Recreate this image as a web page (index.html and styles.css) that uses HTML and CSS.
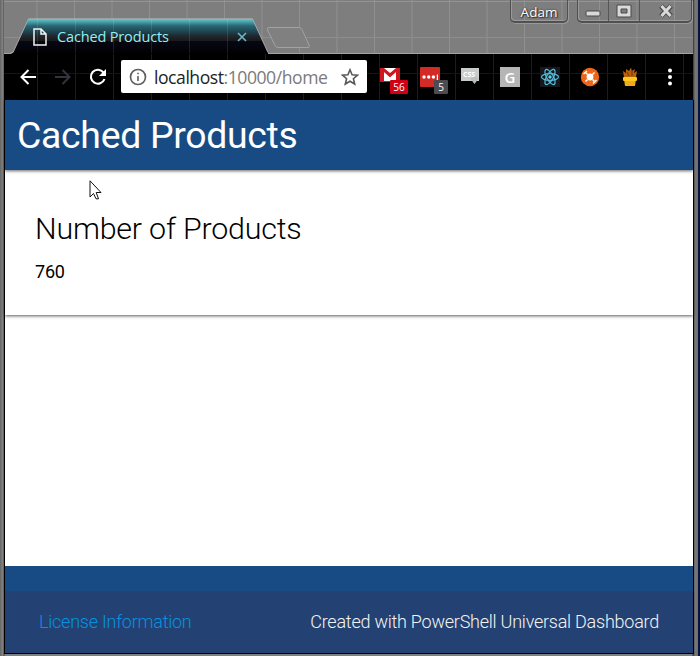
FILE: index.html
```html
<!DOCTYPE html>
<html lang="en">
<head>
<meta charset="utf-8">
<title>Cached Products</title>
<link rel="stylesheet" href="styles.css">
</head>
<body>
<div class="window">
  <header class="titlebar">
    <div class="tab">
      <svg class="tab-shape" width="258" height="36" viewBox="0 0 258 36">
        <defs><linearGradient id="g" x1="0" y1="0" x2="0" y2="1">
          <stop offset="0" stop-color="#64c4ca"/><stop offset=".07" stop-color="#4daab3"/><stop offset=".2" stop-color="#2a6673"/><stop offset=".4" stop-color="#1d3c49"/><stop offset=".5" stop-color="#20262a"/><stop offset=".63" stop-color="#19191b"/><stop offset=".64" stop-color="#070713"/><stop offset=".85" stop-color="#03030a"/><stop offset="1" stop-color="#000"/>
        </linearGradient></defs>
        <path d="M0 36L2 34.500 17.500 .8H241.500L257 34.500V36Z" fill="url(#g)"/>
        <path d="M0 34.500H2L17.500 .8H241.500L257 34.500" fill="none" stroke="#a8a8a8"/>
        <path d="M18 1.500H241" stroke="#60c5cc"/>
        <path d="M26.500 1v34M64.500 1v34M102.500 1v34M140.500 1v34M178.500 1v34M216.500 1v34" stroke="#fff" opacity=".1"/>
      </svg>
      <svg class="page-icon" width="14" height="18" viewBox="0 0 14 18"><path d="M1 1H8L13 6V17H1ZM8 1V6H13" fill="none" stroke="#f4f4f4" stroke-width="1.500"/></svg>
      <span class="tab-title">Cached Products</span>
      <svg class="tab-close" width="10" height="10" viewBox="0 0 10 10"><path d="M1 1L9 9M9 1L1 9" stroke="#6fb4c4" stroke-width="1.700"/></svg>
    </div>
    <svg class="new-tab" width="44" height="22" viewBox="0 0 44 22"><path d="M3 .5H33Q35 .5 36 2.500L43 18Q44 20.500 42 20.500H12Q10 20.500 9 18.500L1.500 3Q.5 .5 3 .5Z" fill="#808080" stroke="#a2a2a2"/></svg>
    <div class="user">Adam</div>
    <div class="controls">
      <span class="ctl"><svg width="16" height="7" viewBox="0 0 16 7"><rect x="1" y="1" width="14" height="5" rx="1" fill="#d9d9d9" stroke="#484848"/></svg></span>
      <span class="ctl"><svg width="16" height="14" viewBox="0 0 16 14"><path d="M1 1H15V13H1ZM5 5V9H11V5Z" fill="#d9d9d9" fill-rule="evenodd" stroke="#484848"/></svg></span>
      <span class="ctl ctl-close"><svg width="16" height="14" viewBox="0 0 16 14"><path d="M3 2L13 12M13 2L3 12" stroke="#484848" stroke-width="5"/><path d="M3.500 2L12.500 12M12.500 2L3.500 12" stroke="#d9d9d9" stroke-width="3"/></svg></span>
    </div>
  </header>
  <nav class="toolbar">
    <svg class="nav-icon" width="17" height="16" viewBox="0 0 17 16"><path d="M16 8H2M8.500 1L1.500 8 8.500 15" fill="none" stroke="#fff" stroke-width="2"/></svg>
    <svg class="nav-icon forward" width="17" height="16" viewBox="0 0 17 16"><path d="M1 8H15M8.500 1L15.500 8 8.500 15" fill="none" stroke="#37323c" stroke-width="2"/></svg>
    <svg class="nav-icon reload" width="18" height="18" viewBox="0 0 18 18"><path d="M14.500 4.500A7 7 0 1 0 15.500 11" fill="none" stroke="#fff" stroke-width="2.100"/><path d="M17 1V8H10Z" fill="#fff"/></svg>
    <div class="address">
      <svg class="info" width="18" height="18" viewBox="0 0 18 18"><circle cx="9" cy="9" r="7.500" fill="none" stroke="#5f6064" stroke-width="1.700"/><path d="M8.200 8H9.800V13H8.200ZM8.200 4.700H9.800V6.300H8.200Z" fill="#5f6064"/></svg>
      <span class="url"><b>localhost</b>:10000/home</span>
      <svg class="star" width="18" height="18" viewBox="0 0 18 18"><path d="M9 1.800L11.100 6.700 16.500 7.200 12.400 10.700 13.700 16 9 13.200 4.300 16 5.600 10.700 1.500 7.200 6.900 6.700Z" fill="none" stroke="#58585c" stroke-width="1.600"/></svg>
    </div>
    <div class="extensions">
      <span class="ext"><svg width="20" height="16" viewBox="0 0 20 16"><path d="M0 1H20V15H0Z" fill="#cf1720"/><path d="M3.500 1H16.500L10 6Z" fill="#fff"/><path d="M4 5L10 10 16 5V14H4Z" fill="#fff"/><path d="M3 2L10 8.500 17 2" fill="none" stroke="#cf1720" stroke-width="2.500"/></svg><i class="badge mail">56</i></span>
      <span class="ext"><svg width="20" height="20" viewBox="0 0 20 20"><rect width="20" height="20" rx="1" fill="#d42a25"/><circle cx="4" cy="10" r="1.700" fill="#fff"/><circle cx="8.700" cy="10" r="1.700" fill="#fff"/><circle cx="13.400" cy="10" r="1.700" fill="#fff"/><path d="M16.800 7.500H18V13H16.800Z" fill="#fff"/></svg><i class="badge count">5</i></span>
      <span class="ext css-ext"><svg width="20" height="18" viewBox="0 0 20 18"><path d="M1 1H19V14H1Z" fill="#c8cccc"/><path d="M10 11H12V9H17V11H19L14.500 17Z" fill="#b9bebe"/></svg><em>CSS</em></span>
      <span class="ext g-ext">G</span>
      <span class="ext"><svg width="20" height="20" viewBox="0 0 20 20"><path d="M0 0H20V20H0Z" fill="#15181d"/><g fill="none" stroke="#55bddb" stroke-width="1.200"><ellipse cx="10" cy="10" rx="8.500" ry="3.300"/><ellipse cx="10" cy="10" rx="8.500" ry="3.300" transform="rotate(60 10 10)"/><ellipse cx="10" cy="10" rx="8.500" ry="3.300" transform="rotate(120 10 10)"/></g><circle cx="10" cy="10" r="1.700" fill="#61d0ee"/></svg></span>
      <span class="ext"><svg width="20" height="20" viewBox="0 0 20 20"><circle cx="10" cy="10" r="9.200" fill="#ed6518"/><circle cx="10" cy="10" r="3.400" fill="#fff"/><path d="M7.500 7.500L5.500 5.500M12.500 7.500L14.500 5.500M7.500 12.500L5.500 14.500M12.500 12.500L14.500 14.500" stroke="#fff" stroke-width="1.500"/><path d="M3.500 7L7 4M13 16.500L16.500 13" stroke="#fff" stroke-width="1.500"/></svg></span>
      <span class="ext"><svg width="20" height="20" viewBox="0 0 20 20"><path d="M4 10L3 4 6 6 6 2 9 4 11 .5 12 4 15 2 14 6 17 4 16 10Z" fill="#b7600c"/><path d="M7 5L9 9M12 3V9" stroke="#6d3508"/><path d="M4 12H16L15 19H5Z" fill="#edac18"/><rect x="3" y="10" width="14" height="4" rx="1" fill="#ffc71f"/></svg></span>
    </div>
    <svg class="menu" width="6" height="18" viewBox="0 0 6 18"><g fill="#fff"><circle cx="3" cy="2.500" r="2"/><circle cx="3" cy="9" r="2"/><circle cx="3" cy="15.500" r="2"/></g></svg>
  </nav>
  <main class="page">
    <div class="navbar"><h1>Cached Products</h1></div>
    <section class="card">
      <h2>Number of Products</h2>
      <p>760</p>
    </section>
    <footer class="footer">
      <div class="copyright"><a>License Information</a><span>Created with PowerShell Universal Dashboard</span></div>
    </footer>
  </main>
  <svg class="cursor" width="13" height="20" viewBox="0 0 13 20"><path d="M1 .8V17L4.500 13.500 7 18.800H9.500L7.200 12.500H12Z" fill="#fff" stroke="#111"/></svg>
</div>
</body>
</html>
```
FILE: styles.css
```css
* { box-sizing: border-box; }
body { margin: 0; font-family: Roboto, "Liberation Sans", sans-serif; }
svg { display: block; flex: none; }
.window {
  position: relative;
  display: flex;
  flex-direction: column;
  width: 700px;
  height: 656px;
  overflow: hidden;
  padding: 0 7px 2px 4px;
  background: linear-gradient(90deg, #666 0, #858585 3px, #444 4px, #808080 5px, #808080 692px, #333 693px, #777 695px, #707070 698px, #07143d 698px);
}
.titlebar {
  display: flex;
  height: 54px;
  flex: none;
  align-items: flex-start;
  border-bottom: 1px solid #a4a4a4;
  background:
    linear-gradient(#949494, #949494) 0 1px / 100% 1px no-repeat,
    linear-gradient(#8d8d8d, #8d8d8d) 0 37px / 100% 1px no-repeat,
    linear-gradient(90deg, transparent 36.5px, #909090 36.5px) -4px 0 / 37.5px 100%,
    #7e7e7e;
}
.tab {
  position: relative;
  display: flex;
  align-items: center;
  width: 258px;
  height: 36px;
  margin: 18px 0 0 7px;
  padding: 2px 0 0 22px;
}
.tab-shape { position: absolute; left: 0; top: 0; }
.page-icon, .tab-title, .tab-close { position: relative; }
.tab-title {
  width: 112px;
  margin-left: 10px;
  font: 14.5px/20px "Open Sans", "Noto Sans", sans-serif;
  letter-spacing: -.15px;
  color: #8ff0f7;
  white-space: nowrap;
}
.tab-close { margin-left: 68px; }
.new-tab { margin: 27px 0 0 -3px; }
.user, .controls {
  height: 23px;
  border: solid #505050;
  border-width: 0 1px 2px;
  border-radius: 0 0 5px 5px;
  box-shadow: inset 1px -1px #9a9a9a, 1px 1px #999;
}
.user {
  width: 58px;
  margin-left: auto;
  font: 13.5px/24px "Open Sans", "Noto Sans", sans-serif;
  color: #fff;
  text-align: center;
  text-shadow: 0 0 2px #222, 1px 1px 1px #333;
}
.controls { display: flex; width: 115px; margin: 0 1px 0 9px; }
.ctl { display: flex; flex: 0 0 31px; align-items: center; justify-content: center; border-right: 1px solid #565656; }
.ctl:first-child { padding-top: 5px; }
.ctl-close { flex: 1; border: 0; }
.toolbar {
  display: flex;
  flex: none;
  align-items: center;
  height: 46px;
  padding: 0 20px 1px 16px;
  background:
    linear-gradient(#151515, #151515) 0 19px / 100% 1px no-repeat,
    linear-gradient(90deg, transparent 37px, #1c1c1c 37px) -4px 0 / 38px 100%,
    #000;
}
.forward { margin-left: 17px; }
.reload { margin-left: 18px; }
.address {
  display: flex;
  align-items: center;
  width: 246px;
  height: 33px;
  margin-left: 14px;
  padding: 0 8px;
  border-radius: 2px;
  background: #fff;
}
.url {
  margin-left: 7px;
  font: 17.6px/30px "Open Sans", "Noto Sans", sans-serif;
  letter-spacing: -.46px;
  color: #7b7b7b;
  white-space: nowrap;
}
.url b { font-weight: 400; color: #222; }
.star { margin-left: auto; }
.extensions { display: flex; gap: 20px; margin-left: 13px; }
.ext { position: relative; display: block; width: 20px; height: 20px; }
.badge {
  position: absolute;
  height: 14px;
  border-radius: 1px;
  font: 10px/15px "Open Sans", sans-serif;
  color: #fff;
  text-align: center;
}
.mail { left: 10px; top: 13px; width: 18px; background: #cf0015; }
.count { left: 14px; top: 13px; width: 14px; background: #4b4b51; }
.css-ext em { position: absolute; left: 3px; top: 3px; font: bold 7px/9px "Open Sans", sans-serif; color: #fff; }
.g-ext { background: #b5b5b5; color: #fff; font: 600 15px/20px "Open Sans", sans-serif; text-align: center; }
.menu { margin-left: auto; }
.page {
  display: flex;
  flex: 1;
  flex-direction: column;
  border: solid #000;
  border-width: 0 0 1px 1px;
  background: #fff;
  box-shadow: 1px 0 #000;
}
.navbar { z-index: 1; height: 70px; flex: none; padding-left: 12px; background: #184b83; box-shadow: 0 1px 3px rgba(0,0,0,.6); }
h1 { margin: 0; font-size: 37.4px; line-height: 70px; font-weight: 400; letter-spacing: -.3px; color: #fff; white-space: nowrap; }
.card { height: 145px; flex: none; padding: 40px 30px 0; box-shadow: 0 1px 3px rgba(0,0,0,.65); }
h2 { margin: 0; font-size: 30.4px; line-height: 37px; font-weight: 300; letter-spacing: -.2px; color: #000; white-space: nowrap; }
p { margin: 12px 0 0; font-size: 18px; line-height: 26px; letter-spacing: -.2px; color: #000; }
.footer { margin-top: auto; padding-top: 25px; background: #184b83; }
.copyright {
  display: flex;
  align-items: center;
  justify-content: space-between;
  height: 62px;
  padding: 0 34px;
  background: #234273;
  font-size: 18px;
  font-weight: 300;
  letter-spacing: -.24px;
  line-height: 24px;
  padding-bottom: 1px;
  color: #f4f4f4;
  white-space: nowrap;
}
.copyright a { color: #0792df; }
.cursor { position: absolute; left: 89px; top: 180px; }
```
